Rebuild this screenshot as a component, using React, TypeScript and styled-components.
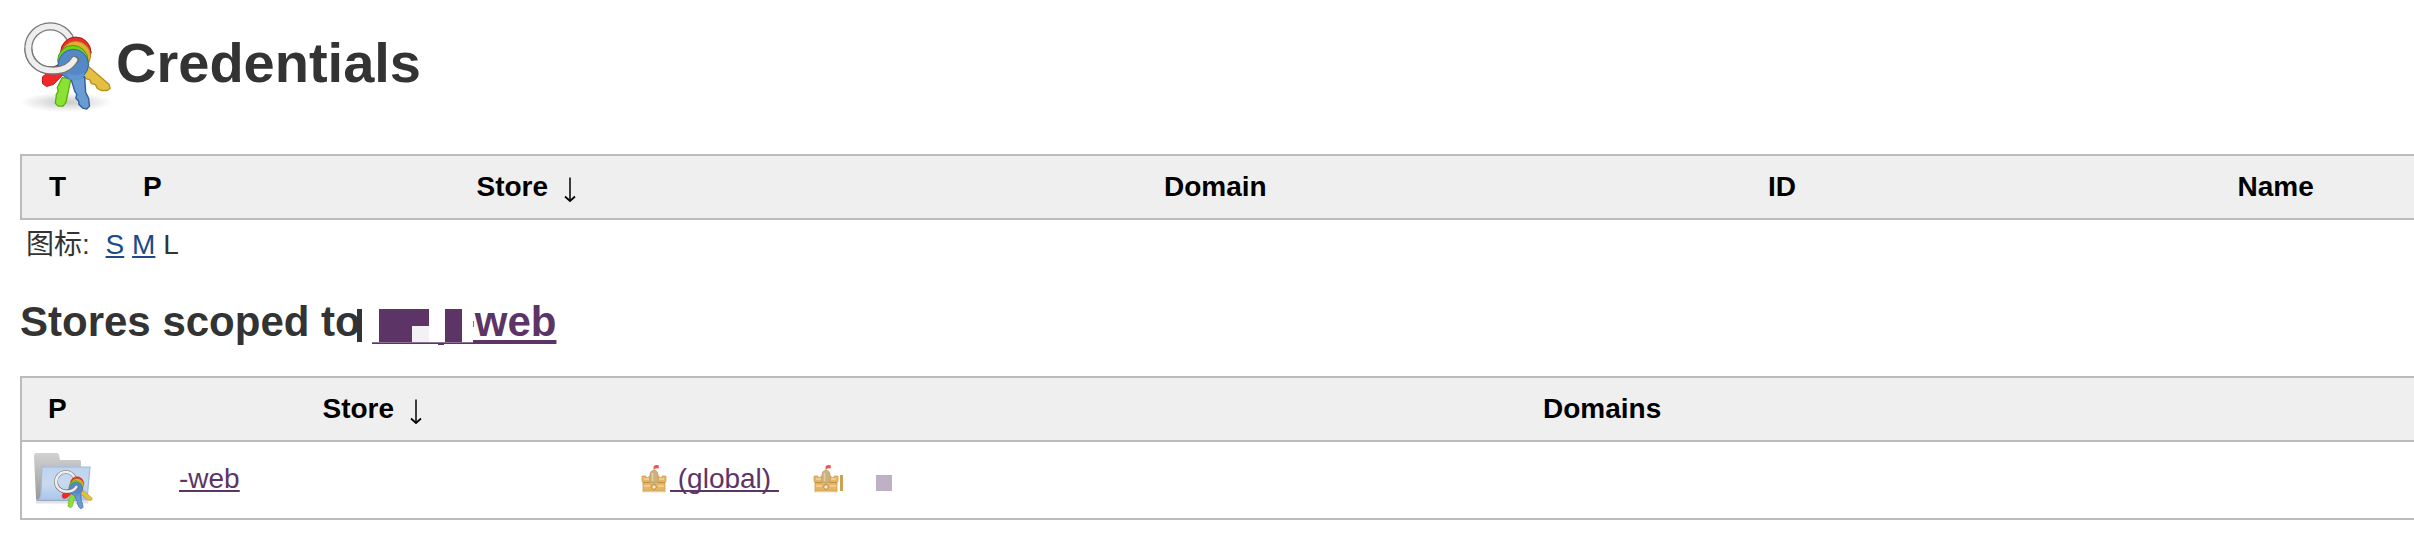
import React from "react";
import styled, { createGlobalStyle } from "styled-components";

const GlobalStyle = createGlobalStyle`
  * { box-sizing: border-box; }
  body {
    margin: 0;
    background: #fff;
    color: #333;
    font: 28px/34px "Liberation Sans", "Noto Sans CJK SC", sans-serif;
  }
`;

const Page = styled.main`
  display: flex;
  flex-direction: column;
  height: 552px;
  padding: 16px 0 0 20px;
`;

const Title = styled.h1`
  display: flex;
  align-items: flex-start;
  height: 138px;
  margin: 0;
  font-size: 56px;
  line-height: 64px;
  span { margin-top: 15px; }
`;

const Table = styled.div`
  border: 2px solid #bbb;
  border-right: 0;
`;

const HeadRow = styled.div`
  display: flex;
  height: 62px;
  background: #efefef;
  color: #000;
  font-weight: bold;
`;

const Cell = styled.div<{ $w?: number; $gap?: number }>`
  display: flex;
  align-items: center;
  gap: ${(p) => p.$gap ?? 0}px;
  flex: ${(p) => (p.$w ? `0 0 ${p.$w}px` : "1")};
  white-space: pre;
`;

const SortArrow = styled.svg`
  width: 16px;
  height: 28px;
  margin: 6px 0 0 14px;
`;

const IconSizes = styled.div`
  display: flex;
  gap: 7.8px;
  height: 34px;
  margin: 8px 0 0 6px;
`;

const SizeLabel = styled.span`
  margin-right: 8px;
`;

const Link = styled.a<{ $visited?: boolean }>`
  color: ${(p) => (p.$visited ? "#5c3566" : "#204a87")};
  text-decoration: underline;
  text-decoration-thickness: 2px;
  text-underline-offset: 2px;
  text-decoration-skip-ink: none;
  white-space: pre;
`;

const Subtitle = styled.h2`
  display: flex;
  height: 60px;
  margin: 36px 0 18px;
  font-size: 42px;
  line-height: 48px;
`;

const StoreLink = styled(Link)`
  text-decoration-thickness: 4px;
  text-underline-offset: 4px;
`;

const Redaction = styled.svg`
  width: 122px;
  height: 60px;
  margin-left: -8px;
  flex: none;
`;

const BodyRow = styled.div`
  display: flex;
  height: 78px;
  padding-bottom: 2px;
  border-top: 2px solid #bbb;
`;

const Marker = styled.i<{ $w: number; $color: string }>`
  width: ${(p) => p.$w}px;
  height: 16px;
  margin-top: 8px;
  background: ${(p) => p.$color};
`;

const Keys = ({ size, shadow }: { size: number; shadow?: boolean }) => (
  <svg width={size} height={size} viewBox="0 0 98 98">
    <defs>
      <radialGradient id="floor">
        <stop offset="0" stopColor="#777" stopOpacity=".4" />
        <stop offset="1" stopColor="#777" stopOpacity="0" />
      </radialGradient>
    </defs>
    {shadow && <ellipse cx="47" cy="88" rx="47" ry="10" fill="url(#floor)" />}
    <g strokeLinejoin="round" strokeLinecap="round">
      <circle cx="31" cy="33" r="22.5" fill="none" stroke="#777" strokeWidth="8.4" />
      <circle cx="31" cy="33" r="22.5" fill="none" stroke="#eeeeec" strokeWidth="5.8" />
      <path d="m38 50-15 12v7l4 3 7-2 14-14z" fill="#ef2929" stroke="#c41a1a" />
      <circle cx="57" cy="37" r="15.5" fill="#e2332b" stroke="#b51616" />
      <path d="m67 49 24 21 1 4-3 2h-6l-4-2-2-4-4-1-2-4-4-1-8-9z" fill="#e3c043" stroke="#b8901d" strokeWidth="1.4" />
      <circle cx="57" cy="41" r="15" fill="#e3ae36" stroke="#b8901d" />
      <circle cx="54" cy="45.500" r="15.500" fill="#73d216" stroke="#4e9a06" />
      <path d="m43 63-5 10 1 4-2 3 0 2-1 7 3 3h5l3-4 5-24z" fill="#8ae234" stroke="#5cab10" strokeWidth="1.3" />
      <circle cx="54.500" cy="49.500" r="15.500" fill="#5488c7" stroke="#3465a4" />
      <path d="m52 64 4 13 2 3-1 4 3 3 0 3 4 4 4 1 3-3-1-8-3-6-1-16z" fill="#6a9bd3" stroke="#2e5f9e" strokeWidth="1.4" />
      <path d="M48 58q8 5 18 0l-2 6q-8 4-14 0z" fill="#6395cf" />
      <circle cx="56" cy="45" r="4" fill="#3a6040" />
      <path d="M8.600 35A22.500 22.500 0 0 0 31 55.500Q48 57 55.500 45" fill="none" stroke="#777" strokeWidth="8.400" />
      <path d="M8.500 32A22.500 22.500 0 0 0 31 55.500Q48 57 55.500 45" fill="none" stroke="#eeeeec" strokeWidth="5.800" />
    </g>
  </svg>
);

const FolderKeys = () => (
  <svg width="64" height="64" viewBox="0 0 64 64">
    <defs>
      <linearGradient id="back" x2="0" y2="1">
        <stop offset="0" stopColor="#d2d2d2" />
        <stop offset="1" stopColor="#969696" />
      </linearGradient>
      <linearGradient id="front" x2="0" y2="1">
        <stop offset="0" stopColor="#bdd3ee" />
        <stop offset=".5" stopColor="#c9daf0" />
        <stop offset="1" stopColor="#a9c6e9" />
      </linearGradient>
    </defs>
    <path d="M4 55h52" stroke="#e2e2e2" strokeWidth="3" />
    <path d="M4 6h21q2 0 2 2l1 5h20q1 0 1 2v39H6q-2 0-2-3L2 10q0-4 2-4z" fill="url(#back)" />
    <path d="M10 20h48l-3 33H6q3-2 3-7z" fill="url(#front)" stroke="#9dbce3" strokeWidth="1.2" />
    <g transform="translate(20.300 20.400)"><Keys size={42.5} /></g>
  </svg>
);

const Castle = () => (
  <svg width="28" height="30" viewBox="0 0 28 30">
    <path d="M2 27.500h24" stroke="#eee3d0" strokeWidth="2" />
    <path d="M14 2v6" stroke="#b99" strokeWidth="1" />
    <path d="M14 2q2-1.500 5-.500l-.500 3q-2-.500-4.500.500z" fill="#ed5353" />
    <path d="M2 12h4v1.500h3V12h10v1.500h3V12h4v5l-1 2v8H3v-8l-1-2z" fill="#e5b566" stroke="#cd9c4c" strokeWidth=".7" />
    <path d="M4 15h5M19 15h5M4 22h6M18 22h6" stroke="#f3d49f" strokeWidth="1.6" />
    <path d="M10 10q0-3 4-4 4 1 4 4v8q-4 2-8 0z" fill="#cdb27d" stroke="#b99a62" strokeWidth=".6" />
    <path d="M12.500 9v8" stroke="#e3d0a8" strokeWidth="1.500" />
    <path d="M3 18.500h7M18 18.500h7" stroke="#c08f42" />
    <circle cx="14" cy="23" r="2.300" fill="#f9ead0" stroke="#bd893c" />
  </svg>
);

const Arrow = () => (
  <SortArrow viewBox="0 0 16 28">
    <path d="M8 1.500v23" stroke="#000" strokeWidth="1.500" />
    <path d="M3 20.500 8 25l5-4.500" fill="none" stroke="#000" strokeWidth="1.700" />
  </SortArrow>
);

export default function App() {
  return (
    <Page>
      <GlobalStyle />
      <Title><Keys size={96} shadow /><span>Credentials</span></Title>
      <Table>
        <HeadRow>
          <Cell $w={27} />
          <Cell $w={94}>T</Cell>
          <Cell $w={333.5}>P</Cell>
          <Cell $w={687.5}>Store<Arrow /></Cell>
          <Cell $w={604}>Domain</Cell>
          <Cell $w={469.5}>ID</Cell>
          <Cell>Name</Cell>
        </HeadRow>
      </Table>
      <IconSizes>
        <SizeLabel>图标:</SizeLabel>
        <Link>S</Link>
        <Link>M</Link>
        <span>L</span>
      </IconSizes>
      <Subtitle>
        <span>Stores scoped to</span>
        <Redaction viewBox="0 0 122 60" shapeRendering="crispEdges">
          <path d="M4 11h5v33H4z" fill="#333" />
          <path d="M26 11h50v17H59v16H26zM92 11h17v33H92z" fill="#5c3566" />
          <path d="M59 28h17v16H59z" fill="#f3f1f6" />
          <path d="M19 44h101v1H19z" fill="#8f7396" />
          <path d="M19 45h101v1H19zM85 46h6v1h-6z" fill="#5c3566" />
          <path d="M120 42h2v4h-2z" fill="#5c3566" />
          <path d="M120 23h1v6h-1z" fill="#8f7396" />
        </Redaction>
        <StoreLink $visited>web</StoreLink>
      </Subtitle>
      <Table>
        <HeadRow>
          <Cell $w={26} />
          <Cell $w={274.5}>P</Cell>
          <Cell $w={1220.5}>Store<Arrow /></Cell>
          <Cell>Domains</Cell>
        </HeadRow>
        <BodyRow>
          <Cell $w={10} />
          <Cell $w={147}><FolderKeys /></Cell>
          <Cell $w={461}><Link $visited>-web</Link></Cell>
          <Cell $w={172} $gap={2}><Castle /><Link $visited> (global) </Link></Cell>
          <Cell $w={64}><Castle /><Marker $w={3} $color="#cf9f52" /></Cell>
          <Cell><Marker $w={16} $color="#bfb0c3" /></Cell>
        </BodyRow>
      </Table>
    </Page>
  );
}
